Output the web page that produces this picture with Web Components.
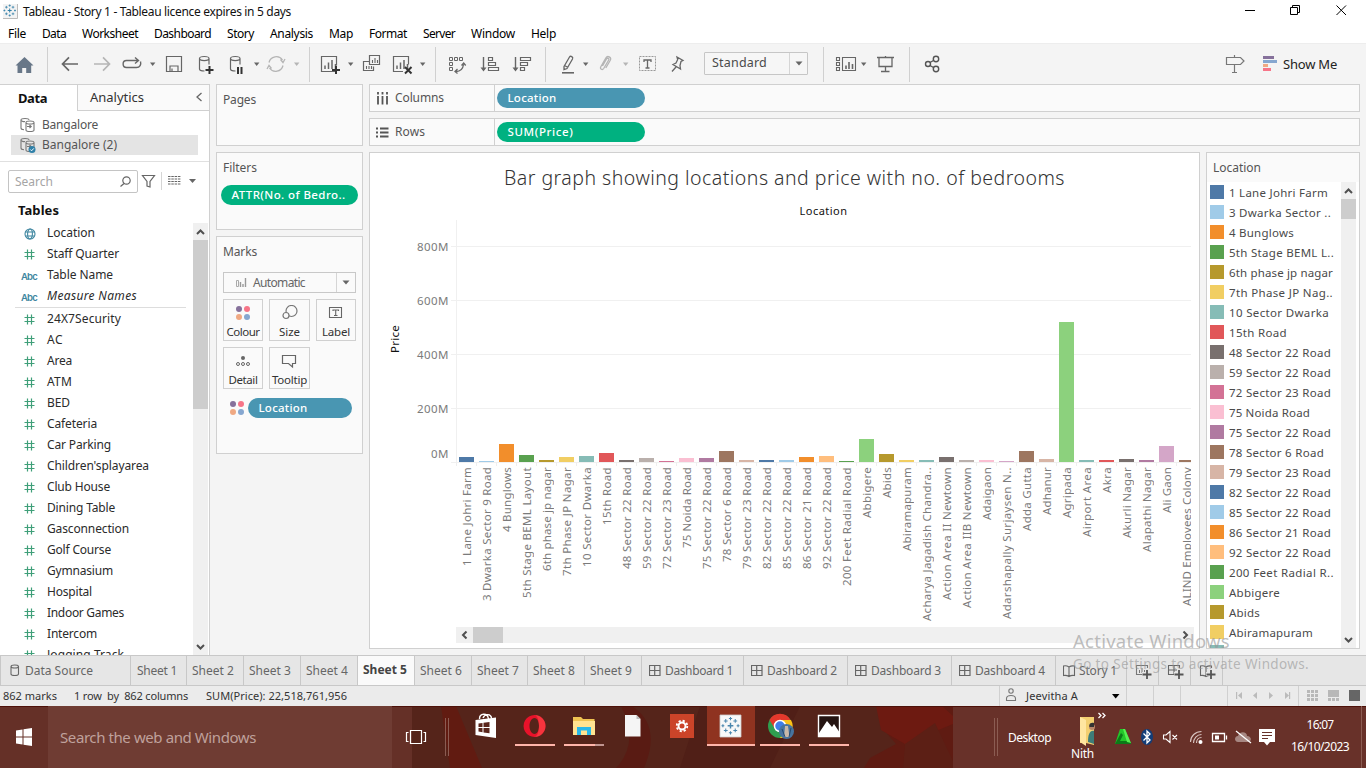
<!DOCTYPE html>
<html lang="en">
<head>
<meta charset="utf-8">
<title>Tableau - Story 1</title>
<style>
html,body{margin:0;height:100%;overflow:hidden}
body{font-family:"Noto Sans","Open Sans",sans-serif;font-size:12px;color:#333;background:#f4f4f4}
</style>
</head>
<body>
<workbook-app></workbook-app>
<script>
/* ---------- helpers ---------- */
const T = (text, w, cls = '') => `<fit-text class="${cls}" w="${w}">${text}</fit-text>`;
/* svg whose viewBox starts at (x,y) so glyphs share the coordinates of their bar */
const S = (x, y, w, h, body) => `<svg width="${w}" height="${h}" viewBox="${x} ${y} ${w} ${h}" fill="none">${body}</svg>`;
/* flex row: each item [x, width, html] becomes a box spaced by its margin */
const row = (items, start = 0) => {
  let end = start;
  return items.map(([x, w, html, cls = '']) => {
    const m = x - end; end = x + w;
    return `<div class="cell ${cls}" style="margin-left:${m}px;width:${w}px">${html}</div>`;
  }).join('');
};
const BASE = `*{box-sizing:border-box}svg{display:block;flex:none}.cell{flex:none;display:flex;align-items:center;height:100%;white-space:nowrap}`;
const define = (name, css, html) => customElements.define(name, class extends HTMLElement {
  connectedCallback() {
    if (this.shadowRoot) return;
    const r = this.attachShadow({ mode: 'open' });
    r.innerHTML = `<style>${BASE}${css}</style>${typeof html === 'function' ? html(this) : html}`;
  }
});
const logo = (cx, cy, s, c = '#4a86ad') => {
  const p = (x, y, r, w) => `M${cx + (x - r) * s} ${cy + y * s}h${2 * r * s}M${cx + x * s} ${cy + (y - r) * s}v${2 * r * s}`;
  return `<path stroke="${c}" stroke-width="${1.5 * s}" d="${p(0, 0, 3)}"/><path stroke="${c}" stroke-width="${1.1 * s}" d="${p(-5, -5, 2)}${p(5, -5, 2)}${p(-5, 5, 2)}${p(5, 5, 2)}${p(0, -7.5, 1.7)}${p(0, 7.5, 1.7)}${p(-8, 0, 1.5)}${p(8, 0, 1.5)}"/>`;
};
const dots = (x, y) => `<circle cx="${x}" cy="${y}" r="3" fill="#86719b"/><circle cx="${x + 8}" cy="${y}" r="3" fill="#f77588"/><circle cx="${x}" cy="${y + 8}" r="3" fill="#f0a983"/><circle cx="${x + 8}" cy="${y + 8}" r="3" fill="#86a7d0"/>`;

/* ---------- title and menu ---------- */
define('title-bar', `:host{display:flex;height:23px;background:#fff;color:#111;font-size:12px}`, row([
  [3, 15, S(3, 0, 15, 23, `<rect x="3" y="4" width="14" height="14" fill="#f3f3f3"/><path d="M17.5 4v14.500H3" stroke="#bbb"/>${logo(9.7, 10.5, .66, '#2f7ea8')}`)],
  [23, 270, T('Tableau - Story 1 - Tableau licence expires in 5 days', 268)],
  [1240, 120, S(1240, 0, 120, 23, `<path stroke="#000" d="M1245 10.500h10M1290.500 7.500h7v7h-7zM1292.500 7v-1.500h7v7h-1.500M1336.500 5.500l9.500 9.500m0-9.500l-9.500 9.500"/>`)]
]));
define('menu-bar', `:host{display:flex;height:20px;padding-top:1px;background:#fff;color:#000}`, row([
  [8, 18, 'File'], [42, 24, 'Data'], [82, 56, 'Worksheet'], [154, 57, 'Dashboard'], [227, 27, 'Story'], [270, 43, 'Analysis'],
  [329, 24, 'Map'], [369, 38, 'Format'], [423, 32, 'Server'], [471, 44, 'Window'], [531, 25, 'Help']
].map(([x, w, t]) => [x, w, T(t, w)])));

/* ---------- toolbar ---------- */
const G = '#666', L = '#b5b5b5';
const tb = (x, w, body) => [x, w, S(x, 43, w, 41, body)];
const sep = x => tb(x, 1, `<path d="M${x + .5} 47v35" stroke="#d0d0d0"/>`);
const caret = (x, c = G) => tb(x, 6, `<path d="M${x} 62.500h5.400l-2.700 3.500z" fill="${c}"/>`);
const bars = (x, y) => `<path stroke="${G}" stroke-width="1.500" d="M${x} ${y}v-3.500m3.500 3.500v-6.500m3.500 6.500v-9m3.500 9v-5"/>`;
const cyl = (x, y) => `<path stroke="${G}" stroke-width="1.200" d="M${x} ${y}c0-2.700 9.500-2.700 9.500 0s-9.500 2.700-9.500 0v10.500c0 1.400 2 2 5 2M${x + 9.5} ${y}v6"/>`;
define('tool-bar', `:host{display:flex;height:41px;background:#f4f4f4;border-top:1px solid #ededed;margin-bottom:0}svg{margin-top:-1px}
.sel{height:23px;border:1px solid #c6c6c6;border-radius:1px;align-self:flex-start;margin-top:8px;color:#4a4a4a;padding-left:7px;font-size:12.500px;background:#f6f6f6}.sel fit-text{margin-top:-2px}
.sel i{margin-left:auto;width:18px;height:21px;border-left:1px solid #d5d5d5;display:flex;align-items:center;justify-content:center}.sel svg{margin:0}
.sm{color:#222;font-size:13px}.sm fit-text{margin-top:-1px}`, row([
  tb(15, 20, `<path fill="#687788" d="M15.500 65.500L24.500 57l9 8.500h-2.300V73h-5v-5h-4v5h-4.700v-7.500z"/>`),
  sep(47),
  tb(61, 18, `<path stroke="${G}" stroke-width="1.700" d="M62.500 64H78M69 57.300L62.500 64l6.500 6.700"/>`),
  tb(93, 18, `<path stroke="${L}" stroke-width="1.700" d="M94 64h15.500M103 57.300l6.500 6.700-6.500 6.700"/>`),
  tb(122, 20, `<path stroke="${G}" stroke-width="1.400" d="M128 67.500h-1.500c-4.500 0-4.500-7 0-7H138M135 57.500l3.500 3-3.500 3M127 67.500h9.500c3.500 0 4.800-3 4-6"/>`),
  caret(150),
  tb(165, 18, `<path stroke="${G}" stroke-width="1.200" d="M166.500 56.500h15v15h-15zM170 71.500v-5.500h8v5.500M172 71.500v-3"/>`),
  tb(198, 16, cyl(199.5, 58.5) + `<path stroke="#333" stroke-width="2" d="M209.500 66v8M205.500 70h8"/>`),
  tb(229, 16, cyl(230.5, 58.5) + `<path stroke="#333" stroke-width="2" d="M238 67v7M241.500 67v7"/>`),
  caret(254),
  tb(266, 20, `<path stroke="${L}" stroke-width="1.300" d="M269 62.500a7.500 7.500 0 0 1 13.500-2.500M283 65.500a7.500 7.500 0 0 1-13.500 2.500M280.500 59.500l2.500 3 2-3.500M271.500 68.500l-2.500-3-2 3.500"/>`),
  caret(294, L), sep(309),
  tb(320, 21, `<path stroke="${G}" stroke-width="1.200" d="M335 71.500h-13.500v-15h15v9"/>${bars(325, 69)}<path stroke="#333" stroke-width="2" d="M336 66v8M332 70h8"/>`),
  caret(348),
  tb(362, 19, `<path stroke="${G}" stroke-width="1.200" d="M369 61.500h-5.500v9h10v-4M369.500 55.500h10v9h-10z"/><path stroke="${G}" stroke-width="1.100" d="M372.500 63v-3m2.500 3v-5m2.500 5v-3M366.500 69v-3m2.500 3v-3m2.500 3v-3"/>`),
  tb(392, 21, `<path stroke="${G}" stroke-width="1.200" d="M403 71.500h-9.500v-15h15v8"/>${bars(397, 69)}<path stroke="#333" stroke-width="2" d="M405 67l6.500 6.500m0-6.500l-6.500 6.500"/>`),
  caret(420), sep(435),
  tb(448, 19, `<path stroke="${G}" d="M449.500 57.500h3v3h-3zM454.500 57.500h3v3h-3zM459.500 57.500h3v3h-3zM449.500 62.500h3v3h-3zM449.500 67.500h3v3h-3z"/><path stroke="${G}" stroke-width="1.300" d="M456 71.500c5 0 7-3 7.500-7M461.500 65.500l2.200-2.500 2 2.500M457.500 69l-2.500 2.500 2.500 2"/>`),
  tb(480, 20, `<path stroke="${G}" stroke-width="1.400" d="M483.500 57v13"/><path fill="${G}" d="M480.500 67.500h6l-3 4z"/><path stroke="${G}" stroke-width="1.200" d="M488.500 57.500h4v3h-4zM488.500 62.500h7v3h-7zM488.500 67.500h10v3h-10z"/>`),
  tb(512, 20, `<path stroke="${G}" stroke-width="1.400" d="M515.500 57v13"/><path fill="${G}" d="M512.500 67.500h6l-3 4z"/><path stroke="${G}" stroke-width="1.200" d="M520.500 57.500h10v3h-10zM520.500 62.500h7v3h-7zM520.500 67.500h4v3h-4z"/>`),
  sep(545),
  tb(561, 14, `<path stroke="${G}" stroke-width="1.300" d="M564 66.500l5.500-9.500c1-1.500 4-.2 3 2l-5.500 9.500-3 1z M564.500 65.500l3.500 2"/><path stroke="${G}" stroke-width="1.600" d="M562 72.800h12"/>`),
  caret(583),
  tb(598, 14, `<path stroke="${L}" stroke-width="1.300" d="M602.500 66l4-7c1-1.500 3-.3 2.200 1l-5 8.500c-1.400 2-4 .5-2.900-1.700l5-8.800c1.800-3 6-.6 4.500 2.300l-4.500 7.700"/>`),
  caret(623, L),
  tb(638, 19, `<rect x="639.500" y="56.500" width="16" height="14" stroke="#999" stroke-dasharray="2 1"/><path stroke="${G}" stroke-width="1.300" d="M644 62v-2h7v2M647.500 60v8M645.500 68h4"/>`),
  tb(670, 15, `<path stroke="${G}" stroke-width="1.300" d="M677 57l6 3.500-2 1-1 4 .5 3.500-7.500-4.500 3-1.500 1.700-3.500zM676 67l-4 4.500"/>`),
  [704, 104, `${T('Standard', 55)}<i><svg width="8" height="5"><path d="M.5.500h7L4 4.500z" fill="#666"/></svg></i>`, 'sel'],
  sep(823),
  tb(835, 22, `<path stroke="${G}" stroke-width="1.100" d="M836.500 57.500h3v3h-3zM836.500 62.500h3v3h-3zM836.500 67.500h3v3h-3zM842.500 57.500h13v13h-13z"/><path stroke="${G}" stroke-width="1.600" d="M846 69v-3.500m3 3.500v-7m3.500 7v-5"/>`),
  caret(861),
  tb(876, 19, `<path stroke="${G}" stroke-width="1.300" d="M877 57.500h17M879 58v8.500h13V58M885.500 56v1M885.500 67v4M881 71.500h8.500"/>`),
  sep(909),
  tb(924, 17, `<g stroke="#555" stroke-width="1.400"><circle cx="928" cy="64" r="2.500"/><circle cx="936" cy="59" r="2.700"/><circle cx="936" cy="69" r="2.700"/><path d="M930 62.500l3.500-2M930 65.500l3.500 2"/></g>`),
  tb(1225, 20, `<path stroke="#777" stroke-width="1.200" d="M1226.500 57.500h14l3.500 3.500-3.500 3.500h-14zM1234.500 55v2M1234.500 65v7M1232 72.500h5"/>`),
  tb(1263, 15, `<path fill="#86719b" d="M1263 56h11v3h-11z"/><path fill="#86a7d0" d="M1263 60h14v3h-14z"/><path fill="#f0a983" d="M1263 64h5v3h-5z"/><path fill="#f77588" d="M1263 68h8v3h-8z"/>`),
  [1283, 60, T('Show Me', 54), 'sm']
]));

/* ---------- shared pieces ---------- */
define('mark-pill', `:host{display:flex;align-items:center;height:20px;border-radius:10px;color:#fff;padding:0 0 1px 10.500px;background:var(--pill,#4996b2);font-weight:500;font-size:11.500px}`,
  el => T(el.getAttribute('text'), el.getAttribute('tw')));
define('scroll-bar', `:host{display:flex;flex-direction:column;background:#f0f0f0;width:15px}:host([flat]){flex-direction:row;width:auto;height:16px}
.b{width:15px;height:17px;display:flex;align-items:center;justify-content:center;flex:none}:host([flat]) .b{width:17px;height:16px}
.t{background:#cdcdcd;flex:none}.f{flex:1}:host([flat]) .b svg{transform:rotate(-90deg)}`,
  el => {
    const n = el.getAttribute('thumb'), a = d => `<div class="b"><svg width="9" height="8"><path d="${d}" fill="none" stroke="#505050" stroke-width="2"/></svg></div>`;
    return a('M1 6l3.500-3.500L8 6') + `<div class="t" style="${el.hasAttribute('flat') ? 'width' : 'height'}:${n}px"></div><div class="f"></div>` + a('M1 2l3.500 3.500L8 2');
  });

/* ---------- data pane ---------- */
const hash = S(0, 0, 11, 11, `<path stroke="#3f9f79" stroke-width="1.200" d="M3.500.500v10M7.500.500v10M.500 3.500h10M.500 7.500h10"/>`);
const globe = S(0, 0, 12, 12, `<g stroke="#3f86a0" stroke-width="1.100"><circle cx="6" cy="6" r="5"/><ellipse cx="6" cy="6" rx="2.400" ry="5"/><path d="M1.500 4h9M1.500 8h9"/></g>`);
const abc = T('Abc', 16, 'abc');
const field = (icon, name, w, cls = '') => `<div class="f ${cls}"><span class="i">${icon}</span>${T(name, w)}</div>`;
const fields = [['24X7Security', 74], ['AC', 16], ['Area', 25], ['ATM', 25], ['BED', 23], ['Cafeteria', 50], ['Car Parking', 64], ["Children'splayarea", 102], ['Club House', 63], ['Dining Table', 68], ['Gasconnection', 82], ['Golf Course', 64], ['Gymnasium', 66], ['Hospital', 45], ['Indoor Games', 77], ['Intercom', 50], ['Jogging Track', 77]];
const db = chk => S(0, 0, 16, 16, `<g stroke="#777" stroke-width="1.100"><path d="M1 3c0-2 8-2 8 0M1 3v8c0 1 1.500 1.700 3 1.700M1 3c0 1.300 3 1.800 4 1.500M6 5.500c0-2 8-2 8 0s-8 2-8 0v7.500c0 2 8 2 8 0V5.500M7 9.500h4M9.500 8l1.700 1.500L9.500 11"/></g>${chk ? '<circle cx="12" cy="12.500" r="3.500" fill="#2f80a8"/><path d="M10.300 12.500l1.300 1.300 2.200-2.400" stroke="#fff"/>' : ''}`);
define('data-pane', `:host{display:flex;flex-direction:column;width:210px;background:#fff;border-right:1px solid #d0d0d0;border-top:1px solid #d0d0d0;flex:none;overflow:hidden}
.tabs{display:flex;height:26px;font-size:13px;flex:none}.d{width:77px;padding:0 0 1px 18px;font-weight:700;color:#111;display:flex;align-items:center}
.a{flex:1;display:flex;align-items:center;padding:0 6px 1px 12px;justify-content:space-between;background:#fafafa;border-left:1px solid #d0d0d0;border-bottom:1px solid #d0d0d0;color:#333}
.src{padding:4px 0 6px 11px;flex:none;border-bottom:1px solid #e0e0e0;color:#555}.src div{display:flex;align-items:center;height:20px;width:187px;padding-left:9px;gap:6px}.src .on{background:#e4e4e4}.src fit-text{margin-top:-2px}
.q{display:flex;height:40px;padding:8px 0 0 8px;flex:none;align-items:flex-start}
.box{width:130px;height:23px;border:1px solid #c4c4c4;border-radius:2px;display:flex;align-items:center;justify-content:space-between;padding:0 6px;color:#a5a5a5}
h4{margin:0;height:21px;padding:0 0 6px 18px;display:flex;align-items:center;font-size:13px;color:#111;flex:none}
.body{display:flex;flex:1;min-height:0}.list{width:193px;overflow:hidden;color:#2b2b2b}
.f{height:21px;display:flex;align-items:center}.f .i{width:47px;padding-left:24px;flex:none}.f>fit-text{margin-top:-2px}.it>fit-text{font-style:italic}
.abc{font-size:9.500px;font-weight:600;font-style:normal;color:#3f86a0;margin-left:-3px;font-family:Inter,sans-serif}hr{border:0;height:1px;background:#ddd;margin:0 7px 1px 15px}`,
`<div class="tabs"><div class="d">${T('Data', 29)}</div><div class="a">${T('Analytics', 54)}<svg width="8" height="10"><path d="M6.500 1L2 5l4.500 4" fill="none" stroke="#666" stroke-width="1.300"/></svg></div></div>
<div class="src"><div>${db(0)}${T('Bangalore', 56)}</div><div class="on">${db(1)}${T('Bangalore (2)', 75)}</div></div>
<div class="q"><div class="box">${T('Search', 38)}<svg width="11" height="11"><g fill="none" stroke="#666" stroke-width="1.200"><circle cx="6.500" cy="4.500" r="3.700"/><path d="M4 7.500L.500 10.500"/></g></svg></div>
${S(138, 170, 62, 23, `<path stroke="#666" stroke-width="1.200" d="M142.500 175.500h12l-4.500 6v5.500l-3-1v-4.500z"/><path stroke="#d5d5d5" d="M161.500 172v18"/><path stroke="#666" stroke-width="1.200" stroke-dasharray="2.500 .800" d="M168 176.500h12.500M168 179h12.500M168 181.500h12.500M168 184h12.500"/><path fill="#666" d="M189 179h7l-3.500 4z"/>`)}</div>
<h4>${T('Tables', 41)}</h4>
<div class="body"><div class="list">${field(globe, 'Location', 48)}${field(hash, 'Staff Quarter', 72)}${field(abc, 'Table Name', 66)}${field(abc, 'Measure Names', 90, 'it')}<hr>${fields.map(f => field(hash, f[0], f[1])).join('')}</div><scroll-bar thumb="169"></scroll-bar></div>`);

/* ---------- cards ---------- */
define('side-card', `:host{display:block;background:#fafafa;border:1px solid #d0d0d0;color:#555}.h{height:30px;padding:0 0 1px 6px;display:flex;align-items:center}`,
  el => `<div class="h">${T(el.getAttribute('label'), el.getAttribute('tw'))}</div><slot></slot>`);
define('mark-button', `:host{display:flex;flex-direction:column;align-items:center;height:42px;border:1px solid #d0d0d0;color:#333;background:#fafafa;font-size:11.500px;overflow:visible}.g{height:23px;padding-top:5px;display:flex}.t{display:flex;height:18px;align-items:center}`,
  el => `<div class="g">${S(0, 0, 18, 18, {
    colour: dots(5, 4),
    size: `<g stroke="#777" stroke-width="1.200" transform="translate(0 -1)"><circle cx="10.500" cy="7" r="5.500"/><circle cx="5" cy="11.500" r="3" fill="#fafafa"/></g>`,
    label: `<path stroke="#666" stroke-width="1.100" d="M2.500 2.500h12v10h-12zM6 6V5h5.500v1M8.700 5v5.500M7 10.500h3.500"/>`,
    detail: `<circle cx="9" cy="5" r="2" fill="#666"/><g stroke="#666"><circle cx="4" cy="11" r="1.500"/><circle cx="9" cy="11" r="1.500"/><circle cx="14" cy="11" r="1.500"/></g>`,
    tooltip: `<path stroke="#666" stroke-width="1.200" d="M1.500 2.500h13v8h-3v3.500l-4-3.500h-6z"/>`
  }[el.getAttribute('icon')])}</div><div class="t">${T(el.getAttribute('text'), el.getAttribute('tw'))}</div>`);
define('card-column', `:host{display:flex;flex-direction:column;gap:6px;width:147px;margin-left:6px;flex:none}
.g{display:grid;grid-template-columns:40px 41px 40px;gap:6px;padding:6px 0 0 6px}.dd{display:flex;align-items:center;margin:5px 6px 0;height:21px;border:1px solid #c8c8c8;padding-left:11px;gap:6px;color:#666}
.dd i{margin-left:auto;width:19px;height:19px;border-left:1px solid #d5d5d5;display:flex;align-items:center;justify-content:center}.p{display:flex;padding:9px 0 0 11px;gap:2px}`,
`<side-card label="Pages" tw="33" style="height:62px"></side-card>
<side-card label="Filters" tw="34" style="height:78px"><mark-pill text="ATTR(No. of Bedro.." tw="114" style="--pill:#00b180;margin:2px 4px 0"></mark-pill></side-card>
<side-card label="Marks" tw="34" style="height:218px">
<div class="dd"><svg width="12" height="11"><path d="M1.500 3.500h2v6h-2z" fill="none" stroke="#aaa"/><path d="M5.500 5v5M8 7v3M10.500 1v9" stroke="#999" stroke-width="1.400"/></svg>${T('Automatic', 52)}<i><svg width="8" height="5"><path d="M.5.500h7L4 4.500z" fill="#666"/></svg></i></div>
<div class="g"><mark-button icon="colour" text="Colour" tw="33"></mark-button><mark-button icon="size" text="Size" tw="21"></mark-button><mark-button icon="label" text="Label" tw="28"></mark-button><mark-button icon="detail" text="Detail" tw="29"></mark-button><mark-button icon="tooltip" text="Tooltip" tw="35"></mark-button></div>
<div class="p">${S(0, 0, 18, 20, dots(5, 6))}<mark-pill text="Location" tw="49" style="width:104px"></mark-pill></div></side-card>`);
define('shelf-row', `:host{display:flex;height:28px;background:#fafafa;border:1px solid #d0d0d0;color:#555;align-items:center}.l{width:125px;height:26px;border-right:1px solid #d0d0d0;display:flex;align-items:center;padding-left:6px;gap:6px}.l fit-text{margin-top:-1px}mark-pill{width:148px;margin-left:2px}`,
  el => `<div class="l">${S(0, 0, 13, 13, el.hasAttribute('rows') ? '<path stroke="#555" stroke-width="1.800" d="M0 2.500h2M4 2.500h8.500M0 6.500h2M4 6.500h8.500M0 10.500h2M4 10.500h8.500"/>' : '<path stroke="#555" stroke-width="1.800" d="M2 0v2.500M6.500 0v2.500M11 0v2.500M2 4v8.500M6.500 4v8.500M11 4v8.500"/>')}${T(el.getAttribute('label'), el.getAttribute('lw'))}</div><mark-pill text="${el.getAttribute('text')}" tw="${el.getAttribute('tw')}" style="--pill:${el.getAttribute('color')}"></mark-pill>`);

/* ---------- chart ---------- */
const C = { b: '#4e79a7', lb: '#a0cbe8', o: '#f28e2b', lo: '#ffbe7d', g: '#59a14f', lg: '#8cd17d', y: '#b6992d', ly: '#f1ce63', t: '#86bcb6', r: '#e15759', k: '#79706e', lk: '#bab0ac', p: '#d37295', lp: '#fabfd2', v: '#b07aa1', lv: '#d4a6c8', n: '#9d7660', ln: '#d7b5a6' };
const data = [['1 Lane Johri Farm', 99, 'b', 5], ['3 Dwarka Sector 9 Road', 134, 'lb', 1], ['4 Bunglows', 65, 'o', 18], ['5th Stage BEML Layout', 131, 'g', 7], ['6th phase jp nagar', 104, 'y', 2], ['7th Phase JP Nagar', 109, 'ly', 5], ['10 Sector Dwarka', 100, 't', 6], ['15th Road', 58, 'r', 9], ['48 Sector 22 Road', 102, 'k', 2], ['59 Sector 22 Road', 102, 'lk', 4], ['72 Sector 23 Road', 102, 'p', 1], ['75 Noida Road', 81, 'lp', 4], ['75 Sector 22 Road', 102, 'v', 4], ['78 Sector 6 Road', 95, 'n', 11], ['79 Sector 23 Road', 102, 'ln', 2], ['82 Sector 22 Road', 102, 'b', 2], ['85 Sector 22 Road', 102, 'lb', 2], ['86 Sector 21 Road', 102, 'o', 5], ['92 Sector 22 Road', 102, 'lo', 6], ['200 Feet Radial Road', 119, 'g', 1], ['Abbigere', 51, 'lg', 23], ['Abids', 31, 'y', 8], ['Abiramapuram', 84, 'ly', 2], ['Acharya Jagadish Chandra..', 154, 't', 2], ['Action Area II Newtown', 133, 'k', 5], ['Action Area IIB Newtown', 141, 'lk', 2], ['Adaigaon', 53, 'lp', 2], ['Adarshapally Surjaysen N..', 152, 'lv', 1], ['Adda Gutta', 64, 'n', 11], ['Adhanur', 48, 'ln', 3], ['Agripada', 51, 'lg', 140], ['Airport Area', 70, 't', 2], ['Akra', 26, 'r', 2], ['Akurli Nagar', 71, 'k', 3], ['Alapathi Nagar', 85, 'v', 2], ['Ali Gaon', 46, 'lv', 16], ['ALIND Employees Colony', 139, 'n', 2]];
define('bar-chart', `:host{display:flex;flex-direction:column;width:831px;background:#fff;border:1px solid #d0d0d0}
.title{height:48px;padding-top:1px;display:flex;align-items:center;justify-content:center;font-size:19.500px;font-weight:300;color:#333;flex:none}
.sub{height:19px;padding-left:78px;display:flex;align-items:center;justify-content:center;font-size:11px;color:#111;flex:none}
.m{display:flex;height:407px;flex:none}.ax{width:36px;padding:105px 0 0 17px}.ax fit-text{writing-mode:vertical-rl;transform:rotate(180deg);font-size:11.500px;color:#111;line-height:15px}
.y{width:43px;display:flex;flex-direction:column;align-items:flex-end;padding:16px 0 0 0;color:#7b7b7b;font-size:11.500px}.y div{height:54px;line-height:21px}.y div:last-child{margin-top:-9px}
.plot{width:742px;overflow:hidden;padding-left:2px}
.bars{height:243px;display:flex;align-items:flex-end;padding:0 0 1px 8px;background:linear-gradient(#f0f0f0,#f0f0f0) 5px 0/1px 100% no-repeat,linear-gradient(#f0f0f0 1px,transparent 1px) 0 26px/740px 54px repeat-y,linear-gradient(#f0f0f0,#f0f0f0) 0 100%/100% 1px no-repeat;width:740px;overflow:hidden}
.bars i{width:15px;margin-right:5px;flex:none}
.labs{display:flex;width:735px;overflow:hidden;height:158px;margin-left:5px;color:#7b7b7b;font-size:11.500px;background:linear-gradient(90deg,#eee 1px,transparent 1px) 0 0/20px 3px repeat-x}
.labs div{width:20px;flex:none;padding:4px 0 0 2px;display:flex;align-items:flex-start}.labs fit-text{writing-mode:vertical-rl;transform:rotate(180deg);line-height:18px}
scroll-bar{margin:0 0 0 86px;width:738px!important}`,
`<div class="title">${T('Bar graph showing locations and price with no. of bedrooms', 561)}</div><div class="sub">${T('Location', 48)}</div>
<div class="m"><div class="ax">${T('Price', 28)}</div><div class="y">${['800M', '600M', '400M', '200M'].map(t => `<div>${T(t, 32)}</div>`).join('')}<div>${T('0M', 18)}</div></div>
<div class="plot"><div class="bars">${data.map(d => `<i style="height:${d[3]}px;background:${C[d[2]]}"></i>`).join('')}</div><div class="labs">${data.map(d => `<div>${T(d[0], d[1])}</div>`).join('')}</div></div></div>
<scroll-bar flat thumb="30"></scroll-bar>`);

/* ---------- legend ---------- */
const cut = { 1: ['3 Dwarka Sector ..', 102], 3: ['5th Stage BEML L..', 105], 5: ['7th Phase JP Nag..', 104], 19: ['200 Feet Radial R..', 105] };
define('colour-legend', `:host{display:flex;flex-direction:column;width:154px;background:#fafafa;border:1px solid #d0d0d0;overflow:hidden}.h{height:29px;flex:none;display:flex;align-items:center;padding-left:6px;color:#555}
.b{display:flex;flex:1;min-height:0;background:#fff}.l{width:134px;overflow:hidden;font-size:11.500px}.l div{display:flex;height:20px;align-items:center;gap:5px;padding-left:3px;color:#4a4a4a}.l i{width:14px;height:14px;margin-top:0;flex:none}`,
`<div class="h">${T('Location', 48)}</div><div class="b"><div class="l">${data.slice(0, 24).map((d, i) => { const [t, w] = cut[i] || d; return `<div><i style="background:${C[d[2]]}"></i>${i < 23 ? T(t, w) : ''}</div>`; }).join('')}</div><scroll-bar thumb="20"></scroll-bar></div>`);

/* ---------- sheet tabs ---------- */
const dash = S(0, 0, 14, 29, `<path stroke="#666" stroke-width="1.200" d="M.5 9.500h10.500v10h-10.500zM5.700 9.500v10M0 14.500h11"/>`);
const book = x => `<path stroke="#666" stroke-width="1.100" d="M${x + .5} 10c2-.6 4 0 5.500 1 1.500-1 3-1.500 5.500-1v9.500c-2-.4-4 0-5.500 1-1.500-1-3.500-1.400-5.500-1zM${x + 6} 11v9"/>`;
const tab = (x, e, tx, t, w, pre = '', cls = '') => [x, e - x, `${pre}<span style="margin-left:${tx - x - (x ? 1 : 0) - (pre ? 22 : 0)}px">${T(t, w)}</span>`, cls];
const pad = svg => `<span style="width:22px;padding-left:7px;flex:none">${svg}</span>`;
const plus = x => `<path stroke="#e6e6e6" stroke-width="4" d="M${x} 12v10M${x - 5} 18h10"/><path stroke="#555" stroke-width="1.800" d="M${x} 14v9M${x - 4.500} 18.500h9"/>`;
define('sheet-tabs', `:host{display:flex;height:31px;background:#e6e6e6;border-top:1px solid #c8c8c8;border-bottom:1px solid #c8c8c8;color:#666}.cell{border-left:1px solid #c8c8c8}.cell:first-child{border-left:0}.on{background:#fafafa;color:#444;font-weight:700;border-right:0;padding-bottom:2px}.cell:last-child{border-right:1px solid #c8c8c8}`,
row([
  tab(0, 130, 24, 'Data Source', 68, pad(S(0, 0, 12, 29, `<path stroke="#666" stroke-width="1.100" d="M3 10.500c0-2 7.500-2 7.500 0s-7.500 2-7.500 0v7.500c0 2 7.500 2 7.500 0v-7.500"/>`))),
  tab(130, 186, 137, 'Sheet 1', 40), tab(186, 243, 192, 'Sheet 2', 42), tab(243, 300, 249, 'Sheet 3', 42), tab(300, 357, 306, 'Sheet 4', 42),
  tab(357, 414, 363, 'Sheet 5', 44, '', 'on'), tab(414, 471, 420, 'Sheet 6', 42), tab(471, 527, 477, 'Sheet 7', 42), tab(527, 584, 533, 'Sheet 8', 42), tab(584, 641, 590, 'Sheet 9', 42),
  tab(641, 743, 665, 'Dashboard 1', 68, pad(dash)), tab(743, 847, 767, 'Dashboard 2', 70, pad(dash)), tab(847, 951, 871, 'Dashboard 3', 70, pad(dash)), tab(951, 1055, 975, 'Dashboard 4', 70, pad(dash)),
  tab(1055, 1126, 1079, 'Story 1', 38, pad(S(0, 0, 14, 29, book(0)))),
  [1126, 32, S(1127, 0, 30, 29, `<path stroke="#777" stroke-width="1.100" d="M1136.500 9.500h11v9h-11z"/><path stroke="#777" d="M1139.500 17v-3m2.500 3v-5m2.500 5v-3"/>${plus(1147)}`)],
  [1158, 32, S(1159, 0, 30, 29, `<path stroke="#666" stroke-width="1.100" d="M1168.500 9.500h11v9h-11zM1174 9.500v9M1168.500 14h11"/>${plus(1179)}`)],
  [1190, 33, S(1191, 0, 30, 29, book(1200) + plus(1211))]
]));
define('status-bar', `:host{display:flex;height:20px;background:#ebebeb;color:#333;font-size:11px}.s{border-left:1px solid #d0d0d0}fit-text{margin-top:-1px}`, row([
  [3, 54, T('862 marks', 54)], [74, 114, T('1 row&nbsp; by&nbsp; 862 columns', 114)], [206, 142, T('SUM(Price): 22,518,761,956', 141)],
  [999, 127, S(1000, 686, 26, 20, `<g stroke="#777" stroke-width="1.100"><circle cx="1011" cy="691" r="2.200"/><path d="M1006.500 700.500v-2c0-4 9-4 9 0v2z"/></g>`) + T('Jeevitha A', 52) + `<svg style="margin-left:34px" width="8" height="5"><path d="M0 0h7.500L3.700 4.500z" fill="#000"/></svg>`, 's'],
  [1126, 27, '', 's'], [1153, 27, '', 's'], [1180, 47, '', 's'],
  [1227, 71, S(1228, 686, 70, 20, `<g fill="#bbb"><path d="M1236 692h1.200v7h-1.200zM1242 692v7l-4-3.500zM1257 692v7l-4-3.500zM1269 692v7l4-3.500zM1285 692v7l4-3.500zM1289 692h1.200v7h-1.200z"/></g>`), 's'],
  [1298, 68, S(1299, 686, 66, 20, `<path stroke="#b8b8b8" stroke-width="3" stroke-dasharray="3 1" d="M1307 691.500h11M1307 695.500h11M1307 699.500h11M1328 699.500h11"/><path fill="#b8b8b8" d="M1328 690h11v7h-11z"/><path fill="#666" d="M1349 690h11v11h-11z"/>`), 's']
]));

/* ---------- task bar ---------- */
const K = (x, w, body) => [x, w, S(x, 706, w, 62, body)];
const under = (x, w) => `<path fill="#ffb5aa" d="M${x} 744h${w}v2h-${w}z"/>`;
define('task-bar', `:host{display:flex;position:relative;height:62px;background:#55241a;color:#fff;border-top:0;overflow:hidden}.bg{position:absolute;left:0;top:0}.cell{position:relative}
.s{background:#6f3c33;color:#bfa19c;font-size:15px;padding-left:12px}.dk{font-size:12px}.fold{flex-direction:column;align-items:flex-start}.fold fit-text{line-height:14px;margin-top:0}
.clock{flex-direction:column;padding-top:9px;font-size:12px;justify-content:flex-start;line-height:19px}.clock fit-text{margin-bottom:3px}`,
`<div class="bg">${S(0, 706, 1366, 62, `<path fill="#501f17" d="M700 706h100l-30 62h-90z"/><path fill="#64190f" d="M450 706l6 0 26 62h-32zM441 706h9v62z" opacity=".8"/><path fill="#591b13" d="M632 706q30 20 12 62h-28q24-25 5-62z"/><path fill="#5f1b12" d="M878 706h76v62h-90l6-10 26-14-12-14z"/><path fill="#6d1a11" d="M876 706h66l11 10v8l-48 20-24-14z"/><path fill="#5c1f15" d="M905 744l30-21 18 38v7h-50z"/><path fill="#653027" d="M0 706h412v62H0z"/><path fill="#683129" d="M953 706h413v62H953z"/><path stroke="#4d1109" d="M0 706.500h1366"/>`)}</div>` + row([
  K(14, 20, `<path fill="#fff" d="M16 730.500l6.500-1v7H16zM23.500 729.300l8.500-1.300v8.500h-8.500zM16 737.500h6.500v7L16 743.600zM23.500 737.500H32v8.500l-8.500-1.300z"/>`),
  [48, 344, T('Search the web and Windows', 196), 's'],
  K(404, 24, `<path stroke="#fff" stroke-width="1.200" d="M410.500 730.500h11v13h-11zM408.500 732.500h-2v9h2M423.500 732.500h2v9h-2"/>`),
  K(444, 6, `<path stroke="#8b5c52" d="M445.500 718v38M448.500 718v38"/>`),
  K(474, 24, `<path fill="#fff" d="M475.500 720l20.500-2.500V738l-20.500-3z"/><path stroke="#fff" stroke-width="1.400" d="M479.500 719c0-6 8-6.500 9 0M483 718c2-5 8-4 8.500 0"/><path fill="#5a251b" d="M478.500 723.500l4-.5v4h-4zM483.500 722.800l6-.8v5h-6zM478.500 728h4v4.200l-4-.6zM483.500 728h6v5.200l-6-.8z"/>`),
  K(515, 40, `<path fill="#e8122a" fill-rule="evenodd" d="M534.500 715a11 11 0 1 0 .1 0zM534.500 718c3 0 4.500 4 4.500 8s-1.500 8-4.500 8-5-4-5-8 2-8 5-8z"/><path fill="#ff4b4b" d="M534.500 715a11 11 0 0 1 0 22c6-1 6-21 0-22z" opacity=".6"/>${under(515, 40)}`),
  K(564, 40, `<path fill="#efc352" d="M573 717h8l2 2h11.500v16H573z"/><path fill="#ffe391" d="M573 721h22v14h-22z"/><path fill="#28b8ea" d="M577 727h14v8h-4v-4.500h-6v4.500h-4z"/>${under(564, 31)}<path fill="#c09590" d="M595 744h9v2h-9z"/>`),
  K(624, 18, `<path fill="#f5f5f5" d="M625 715h11.500l4 4v17.500H625z"/><path fill="#bbb" d="M636.500 715v4h4z"/>`),
  K(670, 24, `<path fill="#cb4429" d="M670 714h24v24h-24z"/><circle cx="682" cy="726" r="3.500" stroke="#fff" stroke-width="2"/><circle cx="682" cy="726" r="5.300" stroke="#fff" stroke-width="1.800" stroke-dasharray="2.200 1.960"/>`),
  K(707, 48, `<path fill="#8f3320" d="M707 706h48v40h-48z"/>${under(707, 48)}<path fill="#f8f8f8" stroke="#ccc" stroke-width=".8" d="M720 715h21v22h-21z"/>${logo(730.5, 725.7, .95)}`),
  K(760, 40, `<circle cx="780" cy="726" r="12" fill="#2f9e4f"/><path fill="#e3382c" d="M769.500 720a12 12 0 0 1 21 0H780l-5 9z"/><path fill="#fbc116" d="M781 720h10a12 12 0 0 1-11 18l6-10z"/><circle cx="780" cy="726" r="5.500" fill="#3f7fe8" stroke="#fff" stroke-width="1.500"/><circle cx="786.500" cy="731.500" r="7.500" fill="#47749f"/><path fill="#c9b8a8" d="M785 726h3l1.500 11h-5.500z"/><path stroke="#25496f" d="M782 729l3 8M791 728l-2 9"/>${under(760, 40)}`),
  K(809, 40, `<path fill="#241411" stroke="#fff" stroke-width="1.400" d="M818.500 715.500h21v21h-21z"/><path fill="#fff" d="M819 733l8-12 5 6 2-3 6 9v4h-21z"/>${under(809, 40)}`),
  K(993, 6, `<path stroke="#8b5c52" d="M994.500 718v38M997.500 718v38"/>`),
  [1008, 44, T('Desktop', 43), 'dk'],
  [1071, 36, S(1071, 706, 36, 41, `<path fill="#f3cf70" d="M1080 717h14v28l-8-2h-6z"/><path fill="#ffe6a0" d="M1080 717l6 3v26l-6-4z"/><circle cx="1092" cy="727" r="3" fill="#b8866a"/><path fill="#3d7c78" d="M1094 731c-4-1-6 3-6 11l6 2z"/><path fill="#333" d="M1094 723c-5-1-5 3-4.500 4h4.500z"/><path stroke="#fff" stroke-width="1.300" d="M1098.500 713l2.500 2.500-2.500 2.500M1102.500 713l2.500 2.500-2.500 2.500"/>`) + T('Nith', 23), 'fold'],
  K(1114, 18, `<path fill="#23c52a" d="M1120 729h5l6 15h-16z"/><path fill="#0b7a18" d="M1121 733l-6 11h16l-1-3h-10l3-6z"/><path fill="#55ef50" d="M1123 729l2 0 6 14-4-1z"/>`),
  K(1140, 14, `<ellipse cx="1147" cy="737" rx="6" ry="8" fill="#123d78"/><path stroke="#fff" stroke-width="1.300" d="M1143.500 733.500l6.500 6.500-3 3v-12l3 3-6.500 6.500"/>`),
  K(1162, 17, `<path stroke="#fff" stroke-width="1.100" d="M1163.500 735h2.500l4-3.500v11l-4-3.500h-2.500zM1172.500 735l4.500 4.500m0-4.500l-4.500 4.500"/>`),
  K(1189, 15, `<g stroke="#d9c5c1" stroke-width="1.100"><path d="M1190.500 742c0-6 5-10.500 11-10.500M1193.500 743c0-4.500 3.500-8.500 8-8.500M1196.500 743c0-3 2-5.500 5-5.500"/></g><circle cx="1200.500" cy="742" r="2" fill="#fff"/>`),
  K(1211, 17, `<path stroke="#fff" stroke-width="1.300" d="M1212.500 733.500h12v8h-12zM1226.500 735.500v4"/><path fill="#fff" d="M1215 735.500h4v4h-4z"/>`),
  K(1234, 18, `<path fill="#a78782" d="M1238 742c-4 0-4-6 0-6 1-5 9-5 9 0 5 0 5 6 1 6z"/><path stroke="#fff" stroke-width="1.200" d="M1236 731l15 12"/>`),
  K(1258, 18, `<path fill="#fff" d="M1259 729h16v13h-5l-3 3.500-3-3.500h-5z"/><path stroke="#683129" stroke-width="1.200" d="M1262 732.500h10M1262 735.500h10M1262 738.500h6"/>`),
  [1290, 60, T('16:07', 27) + T('16/10/2023', 58), 'clock'],
  K(1360, 4, `<path stroke="#8b5c52" d="M1361.500 706v62"/>`)
]));

define('activation-note', `:host{position:absolute;left:1073px;top:628px;color:rgba(150,150,150,.62);font-weight:400;pointer-events:none;display:flex;flex-direction:column;align-items:flex-start}.a{font-size:18.500px;line-height:26px}.b{font-size:13.500px;line-height:20px}`,
  T('Activate Windows', 157, 'a') + T('Go to Settings to activate Windows.', 236, 'b'));

define('workbook-app', `:host{display:flex;flex-direction:column;width:1366px;height:768px;overflow:hidden;position:relative}
.main{display:flex;height:571px;flex:none}.r{margin-left:6px;display:flex;flex-direction:column;gap:6px;width:991px}.v{display:flex;gap:6px;height:497px}`,
`<title-bar></title-bar><menu-bar></menu-bar><tool-bar></tool-bar>
<div class="main"><data-pane></data-pane><card-column></card-column>
<div class="r"><shelf-row label="Columns" lw="49" text="Location" tw="49" color="#4996b2"></shelf-row><shelf-row rows label="Rows" lw="30" text="SUM(Price)" tw="66" color="#00b180"></shelf-row>
<div class="v"><bar-chart></bar-chart><colour-legend></colour-legend></div></div></div>
<sheet-tabs></sheet-tabs><status-bar></status-bar><task-bar></task-bar><activation-note></activation-note>`);

/* text run that spreads its tracking so that it fills the given length */
customElements.define('fit-text', class extends HTMLElement {
  connectedCallback() {
    if (this.shadowRoot) return;
    this.attachShadow({ mode: 'open' }).innerHTML = '<style>:host{display:inline-block;white-space:pre;flex:none}</style><slot></slot>';
    const w = +this.getAttribute('w'), b = this.getBoundingClientRect();
    const vertical = getComputedStyle(this).writingMode !== 'horizontal-tb';
    const natural = vertical ? b.height : b.width;
    this.style.letterSpacing = ((w - natural) / this.textContent.length).toFixed(3) + 'px';
  }
});
</script>
</body>
</html>
